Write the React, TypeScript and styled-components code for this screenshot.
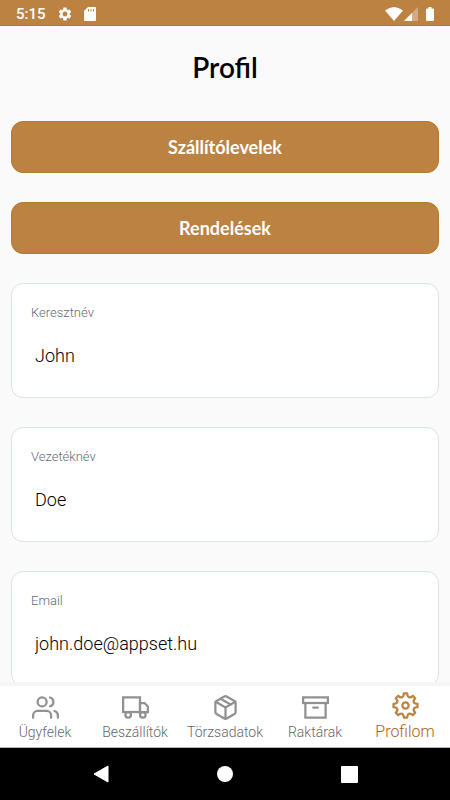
import React from "react";
import styled, { createGlobalStyle } from "styled-components";
import { FiArchive, FiPackage, FiTruck, FiUsers } from "react-icons/fi";
import { MdSettings } from "react-icons/md";

const accent = "#bb8242";

const GlobalStyle = createGlobalStyle`
  *, *::before, *::after { box-sizing: border-box; }
  body {
    margin: 0;
    background: #fafafa;
    font-family: Roboto, "Noto Sans", sans-serif;
  }
`;

const Screen = styled.div`
  display: flex;
  flex-direction: column;
  height: 100vh;
`;

const StatusBar = styled.header`
  display: flex;
  align-items: center;
  justify-content: space-between;
  flex: none;
  height: 26px;
  padding: 2px 16px 0;
  color: #fff;
  background: ${accent};
  border-bottom: 1px solid #b47a2c;
`;

const StatusGroup = styled.div<{ $gap: number }>`
  display: flex;
  align-items: center;
  gap: ${(p) => p.$gap}px;
`;

const Clock = styled.time`
  font-size: 15px;
  font-weight: 500;
  line-height: 24px;
`;

const Content = styled.main`
  display: flex;
  flex: 1;
  flex-direction: column;
  gap: 29px;
  min-height: 0;
  padding: 25px 11px 29px;
  overflow-y: auto;
  scrollbar-width: none;
`;

const Title = styled.h1`
  flex: none;
  margin: 0 0 9px;
  font: 600 28px/32px Lato, sans-serif;
  text-align: center;
  color: #000;
`;

const ActionButton = styled.button`
  flex: none;
  height: 52px;
  border: 1px solid #b47a2c;
  border-radius: 12px;
  color: #fff;
  background: ${accent};
  font: 700 18px/24px Lato, sans-serif;
  cursor: pointer;
`;

const FieldCard = styled.label`
  display: flex;
  flex: none;
  flex-direction: column;
  gap: 14px;
  height: 115px;
  padding: 19px;
  border: 1px solid #dae2ee;
  border-radius: 12px;
  background: #fff;
`;

const FieldLabel = styled.span`
  color: #656a74;
  font-size: 13px;
  font-weight: 300;
  line-height: 20px;
`;

const FieldInput = styled.input`
  width: 100%;
  height: 36px;
  padding: 0 4px;
  border: 0;
  outline: 0;
  color: #000;
  background: transparent;
  font: 300 18px/24px Roboto, sans-serif;
`;

const TabBar = styled.nav`
  display: grid;
  grid-template-columns: repeat(5, 1fr);
  flex: none;
  height: 66px;
  border-top: 4px solid #f5f5f5;
  border-bottom: 1px solid #b5b5b5;
  background: #fff;
`;

const Tab = styled.a<{ $active?: boolean }>`
  display: flex;
  flex-direction: column;
  align-items: center;
  justify-content: flex-end;
  padding-bottom: 5px;
  color: ${(p) => (p.$active ? "#ac6408" : "#686868")};
  font-size: ${(p) => (p.$active ? 16 : 14)}px;
  font-weight: 300;
  line-height: 20px;
  text-decoration: none;
  white-space: nowrap;

  svg {
    width: 27px;
    height: 27px;
    margin-bottom: ${(p) => (p.$active ? 3 : 1)}px;
    color: ${(p) => (p.$active ? accent : "#919191")};
    stroke-linejoin: ${(p) => (p.$active ? "round" : "miter")};
  }
`;

const SystemBar = styled.footer`
  display: flex;
  align-items: center;
  justify-content: center;
  gap: 76px;
  flex: none;
  height: 52px;
  background: #000;
`;

const SystemButton = styled.button`
  display: flex;
  align-items: center;
  justify-content: center;
  width: 48px;
  height: 48px;
  padding: 0;
  border: 0;
  background: transparent;
  cursor: pointer;
`;

const polar = (deg: number, r: number) => {
  const a = (deg * Math.PI) / 180;
  return `${(12 + r * Math.sin(a)).toFixed(2)} ${(12 - r * Math.cos(a)).toFixed(2)}`;
};

// Eight equal teeth joined by rounded valleys.
const gearPath =
  `M${polar(-8, 10.8)}` +
  Array.from({ length: 8 }, (_, i) => {
    const a = i * 45;
    return `L${polar(a + 8, 10.8)}C${polar(a + 14, 7.2)} ${polar(a + 31, 7.2)} ${polar(a + 37, 10.8)}`;
  }).join("") +
  "Z";

const GearIcon = () => (
  <svg viewBox="0 0 24 24" fill="none" stroke="currentColor" strokeWidth="2" aria-hidden="true">
    <path d={gearPath} />
    <circle cx="12" cy="12" r="2.8" />
  </svg>
);

const fields = [
  { label: "Keresztnév", value: "John", type: "text" },
  { label: "Vezetéknév", value: "Doe", type: "text" },
  { label: "Email", value: "john.doe@appset.hu", type: "email" },
];

const tabs = [
  { label: "Ügyfelek", Icon: FiUsers },
  { label: "Beszállítók", Icon: FiTruck },
  { label: "Törzsadatok", Icon: FiPackage },
  { label: "Raktárak", Icon: FiArchive },
  { label: "Profilom", Icon: GearIcon, active: true },
];

const MemoryCardIcon = () => (
  <svg width="12" height="14" viewBox="0 0 12 14" aria-hidden="true">
    <path d="M4 0h7q1 0 1 1v12q0 1-1 1H1q-1 0-1-1V4z" fill="#fff" />
    <path d="M4.500 2v2.500M7 2v2.500M9.500 2v2.500" stroke={accent} strokeWidth="1" />
  </svg>
);

const WifiIcon = () => (
  <svg width="18" height="14" viewBox="0 0 18 14" aria-hidden="true">
    <path d="M0 3.500Q9-3.500 18 3.500L9 14z" fill="#fff" />
  </svg>
);

const SignalIcon = () => (
  <svg width="14" height="14" viewBox="0 0 14 14" aria-hidden="true">
    <path d="M14 0v14H0z" fill="#fff" opacity=".35" />
    <path d="M8 6v8H0z" fill="#fff" />
  </svg>
);

const BatteryIcon = () => (
  <svg width="8" height="14" viewBox="0 0 8 14" aria-hidden="true">
    <path d="M2.500 0h3v1.400H7q1 0 1 1V13q0 1-1 1H1q-1 0-1-1V2.400q0-1 1-1h1.500z" fill="#fff" />
  </svg>
);

export default function App() {
  return (
    <Screen>
      <GlobalStyle />
      <StatusBar>
        <StatusGroup $gap={11}>
          <Clock>5:15</Clock>
          <MdSettings size={16} aria-hidden="true" />
          <MemoryCardIcon />
        </StatusGroup>
        <StatusGroup $gap={1}>
          <WifiIcon />
          <StatusGroup $gap={8}>
            <SignalIcon />
            <BatteryIcon />
          </StatusGroup>
        </StatusGroup>
      </StatusBar>
      <Content>
        <Title>Profil</Title>
        <ActionButton type="button">Szállítólevelek</ActionButton>
        <ActionButton type="button">Rendelések</ActionButton>
        {fields.map((f) => (
          <FieldCard key={f.label}>
            <FieldLabel>{f.label}</FieldLabel>
            <FieldInput type={f.type} defaultValue={f.value} />
          </FieldCard>
        ))}
      </Content>
      <TabBar>
        {tabs.map(({ label, Icon, active }) => (
          <Tab key={label} href="#" $active={active} aria-current={active ? "page" : undefined}>
            <Icon aria-hidden="true" />
            {label}
          </Tab>
        ))}
      </TabBar>
      <SystemBar>
        <SystemButton type="button" aria-label="Vissza">
          <svg width="16" height="18" viewBox="0 0 16 18">
            <path d="M15 1v16L1 9z" fill="#fff" stroke="#fff" strokeLinejoin="round" />
          </svg>
        </SystemButton>
        <SystemButton type="button" aria-label="Kezdőképernyő">
          <svg width="16" height="16" viewBox="0 0 16 16">
            <circle cx="8" cy="8" r="8" fill="#fff" />
          </svg>
        </SystemButton>
        <SystemButton type="button" aria-label="Legutóbbiak">
          <svg width="17" height="17" viewBox="0 0 17 17">
            <rect width="17" height="17" rx="1" fill="#fff" />
          </svg>
        </SystemButton>
      </SystemBar>
    </Screen>
  );
}
